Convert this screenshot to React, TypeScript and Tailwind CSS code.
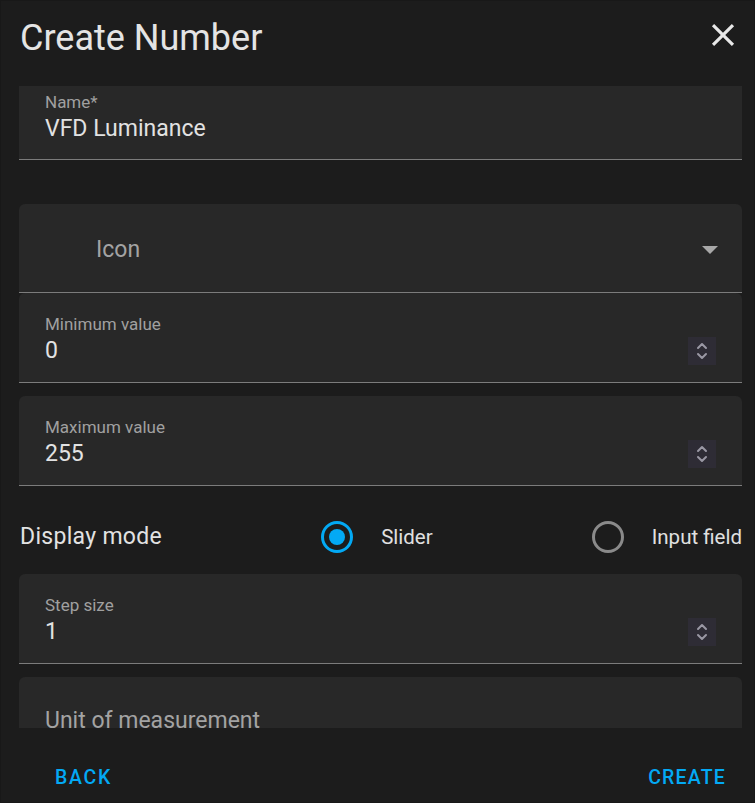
import * as React from 'react';

function Spinner() {
    return (
        <div className="w-[28px] h-[28px] bg-[#2e2c35] flex items-center justify-center">
            <svg width="14" height="22" viewBox="0 0 14 22" fill="none" stroke="#9a98a4" strokeWidth="2" strokeLinecap="round" strokeLinejoin="round">
                <path d="M3 8 L7 4 L11 8" />
                <path d="M3 14 L7 18 L11 14" />
            </svg>
        </div>
    );
}

function NumberField({ label, value }: { label: string; value: string }) {
    return (
        <div className="h-[90px] bg-[#282828] rounded-t-[6px] border-b border-[#7c7c7c] flex items-center pl-[26px] pr-[26px]">
            <div className="flex-1 flex flex-col pt-[4px]">
                <span className="text-[17px] leading-[20px] text-[#a0a0a0]">{label}</span>
                <span className="text-[23px] leading-[28px] text-[#e2e2e2] mt-[3px]">{value}</span>
            </div>
            <div className="mt-[26px]">
                <Spinner />
            </div>
        </div>
    );
}

function Radio({ checked, label }: { checked?: boolean; label: string }) {
    return (
        <div className="flex items-center gap-[28px]">
            <div
                className={
                    checked
                        ? "w-[32px] h-[32px] rounded-full border-[3px] border-[#03a9f4] flex items-center justify-center"
                        : "w-[32px] h-[32px] rounded-full border-[3px] border-[#8a8a8a]"
                }
            >
                {checked && <div className="w-[16px] h-[16px] rounded-full bg-[#03a9f4]" />}
            </div>
            <span className="text-[20.5px] text-[#e0e0e0]">{label}</span>
        </div>
    );
}

export default function App() {
    return (
        <div
            className="w-[755px] h-[803px] bg-[#1c1c1c] border border-[#181818] flex flex-col overflow-hidden"
            style={{ fontFamily: 'Roboto, "Noto Sans", sans-serif' }}
        >
            {/* header */}
            <div className="h-[85px] shrink-0 flex items-start justify-between pl-[19px] pr-[12px]">
                <h1 className="text-[36px] leading-[46px] pt-[14px] text-[#e4e4e4] font-normal">Create Number</h1>
                <button className="mt-[15px]">
                    <svg width="38" height="38" viewBox="0 0 24 24" fill="#e8e8e8">
                        <path d="M19,6.41L17.59,5L12,10.59L6.41,5L5,6.41L10.59,12L5,17.59L6.41,19L12,13.41L17.59,19L19,17.59L13.41,12L19,6.41Z" />
                    </svg>
                </button>
            </div>

            {/* scrolled form */}
            <div className="h-[642px] shrink-0 overflow-hidden pl-[18px] pr-[12px]">
                <div className="-mt-[15px] flex flex-col">
                    <div className="h-[89px] bg-[#282828] rounded-t-[6px] border-b border-[#7c7c7c] flex flex-col justify-center pl-[26px] pt-[4px]">
                        <span className="text-[17px] leading-[20px] text-[#a0a0a0]">Name*</span>
                        <span className="text-[23px] leading-[28px] text-[#e2e2e2] mt-[3px]">VFD Luminance</span>
                    </div>

                    <div className="mt-[44px] h-[89px] bg-[#282828] rounded-t-[6px] border-b border-[#7c7c7c] flex items-center pl-[77px] pr-[24px]">
                        <span className="flex-1 text-[23px] text-[#a3a3a3] pt-[5px]">Icon</span>
                        <svg width="16" height="8" viewBox="0 0 16 8" fill="#a8a8a8" className="mt-[4px]">
                            <path d="M0 0 L16 0 L8 8 Z" />
                        </svg>
                    </div>

                    <NumberField label="Minimum value" value="0" />

                    <div className="mt-[13px]">
                        <NumberField label="Maximum value" value="255" />
                    </div>

                    <div className="h-[89px] flex items-center justify-between pl-[1px] pt-[13px]">
                        <span className="text-[23px] text-[#e2e2e2] tracking-[0.3px]">Display mode</span>
                        <Radio checked label="Slider" />
                        <Radio label="Input field" />
                    </div>

                    <div className="-mt-[1px]">
                        <NumberField label="Step size" value="1" />
                    </div>

                    <div className="mt-[13px] h-[90px] bg-[#282828] rounded-t-[6px] border-b border-[#7c7c7c] flex items-center pl-[26px]">
                        <span className="text-[23px] text-[#a3a3a3]">Unit of measurement</span>
                    </div>
                </div>
            </div>

            {/* footer */}
            <div className="flex-1 flex items-center justify-between pl-[54px] pr-[28px] pt-[26px]">
                <button className="text-[19.5px] font-medium tracking-[1.7px] text-[#03a9f4]">BACK</button>
                <button className="text-[19.5px] font-medium tracking-[1.2px] text-[#03a9f4]">CREATE</button>
            </div>
        </div>
    );
}
